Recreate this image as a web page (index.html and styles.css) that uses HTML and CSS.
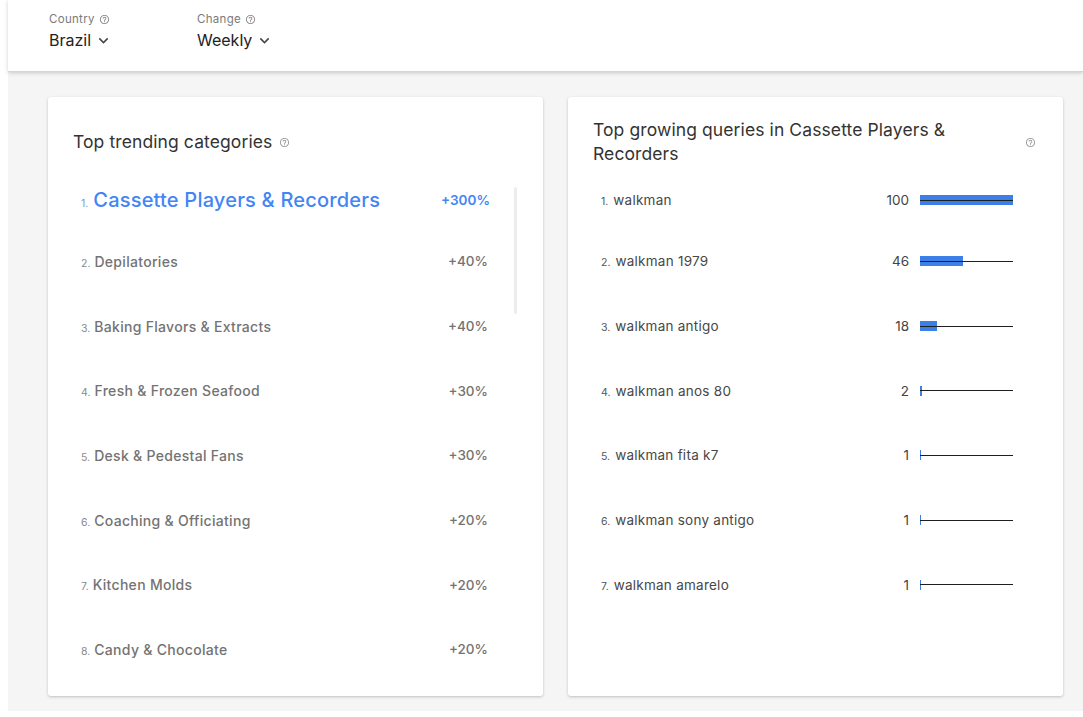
FILE: index.html
```html
<!DOCTYPE html>
<html>
<head>
<meta charset="utf-8">
<link rel="stylesheet" href="styles.css">
</head>
<body>
<div class="page">
  <header class="filters">
    <div class="filter filter-country">
      <div class="label">Country <svg class="help" viewBox="0 0 24 24"><path d="M11 18h2v-2h-2v2zm1-16C6.48 2 2 6.480 2 12s4.48 10 10 10 10-4.48 10-10S17.52 2 12 2zm0 18c-4.41 0-8-3.59-8-8s3.59-8 8-8 8 3.59 8 8-3.59 8-8 8zm0-14c-2.21 0-4 1.79-4 4h2c0-1.1.9-2 2-2s2 .9 2 2c0 2-3 1.75-3 5h2c0-2.25 3-2.5 3-5 0-2.21-1.79-4-4-4z"/></svg></div>
      <div class="value">Brazil <svg class="chev" viewBox="0 0 24 24"><path d="M16.59 8.59L12 13.17 7.41 8.59 6 10l6 6 6-6z"/></svg></div>
    </div>
    <div class="filter">
      <div class="label">Change <svg class="help" viewBox="0 0 24 24"><path d="M11 18h2v-2h-2v2zm1-16C6.48 2 2 6.48 2 12s4.48 10 10 10 10-4.48 10-10S17.52 2 12 2zm0 18c-4.41 0-8-3.59-8-8s3.59-8 8-8 8 3.59 8 8-3.59 8-8 8zm0-14c-2.21 0-4 1.79-4 4h2c0-1.1.9-2 2-2s2 .9 2 2c0 2-3 1.75-3 5h2c0-2.25 3-2.5 3-5 0-2.21-1.79-4-4-4z"/></svg></div>
      <div class="value">Weekly <svg class="chev" viewBox="0 0 24 24"><path d="M16.59 8.59L12 13.17 7.41 8.59 6 10l6 6 6-6z"/></svg></div>
    </div>
  </header>

  <main class="content">
    <section class="card">
      <div class="card-head">
        <h2 class="card-title">Top trending categories</h2>
        <svg class="help help-title" viewBox="0 0 24 24"><path d="M11 18h2v-2h-2v2zm1-16C6.48 2 2 6.48 2 12s4.48 10 10 10 10-4.48 10-10S17.52 2 12 2zm0 18c-4.41 0-8-3.59-8-8s3.59-8 8-8 8 3.59 8 8-3.59 8-8 8zm0-14c-2.21 0-4 1.79-4 4h2c0-1.1.9-2 2-2s2 .9 2 2c0 2-3 1.75-3 5h2c0-2.25 3-2.5 3-5 0-2.21-1.79-4-4-4z"/></svg>
      </div>
      <ol class="list cat-list">
        <li class="row cat active"><span class="name"><span class="num">1.</span>Cassette Players &amp; Recorders</span><span class="pct">+300%</span></li>
        <li class="row cat"><span class="name"><span class="num">2.</span>Depilatories</span><span class="pct">+40%</span></li>
        <li class="row cat"><span class="name"><span class="num">3.</span>Baking Flavors &amp; Extracts</span><span class="pct">+40%</span></li>
        <li class="row cat"><span class="name"><span class="num">4.</span>Fresh &amp; Frozen Seafood</span><span class="pct">+30%</span></li>
        <li class="row cat"><span class="name"><span class="num">5.</span>Desk &amp; Pedestal Fans</span><span class="pct">+30%</span></li>
        <li class="row cat"><span class="name"><span class="num">6.</span>Coaching &amp; Officiating</span><span class="pct">+20%</span></li>
        <li class="row cat"><span class="name"><span class="num">7.</span>Kitchen Molds</span><span class="pct">+20%</span></li>
        <li class="row cat"><span class="name"><span class="num">8.</span>Candy &amp; Chocolate</span><span class="pct">+20%</span></li>
      </ol>
      <div class="scroll-thumb"></div>
    </section>

    <section class="card">
      <div class="card-head spread">
        <h2 class="card-title wrap">Top growing queries in Cassette Players &amp; Recorders</h2>
        <svg class="help help-title" viewBox="0 0 24 24"><path d="M11 18h2v-2h-2v2zm1-16C6.48 2 2 6.48 2 12s4.48 10 10 10 10-4.48 10-10S17.52 2 12 2zm0 18c-4.41 0-8-3.59-8-8s3.59-8 8-8 8 3.59 8 8-3.59 8-8 8zm0-14c-2.21 0-4 1.79-4 4h2c0-1.1.9-2 2-2s2 .9 2 2c0 2-3 1.75-3 5h2c0-2.25 3-2.5 3-5 0-2.21-1.79-4-4-4z"/></svg>
      </div>
      <ol class="list query-list">
        <li class="row query"><span class="name"><span class="num">1.</span>walkman</span><span class="val">100</span><span class="bar"><span class="fill" style="width:100%"></span></span></li>
        <li class="row query"><span class="name"><span class="num">2.</span>walkman 1979</span><span class="val">46</span><span class="bar"><span class="fill" style="width:46%"></span></span></li>
        <li class="row query"><span class="name"><span class="num">3.</span>walkman antigo</span><span class="val">18</span><span class="bar"><span class="fill" style="width:18%"></span></span></li>
        <li class="row query"><span class="name"><span class="num">4.</span>walkman anos 80</span><span class="val">2</span><span class="bar"><span class="fill" style="width:2%"></span></span></li>
        <li class="row query"><span class="name"><span class="num">5.</span>walkman fita k7</span><span class="val">1</span><span class="bar"><span class="fill" style="width:1%"></span></span></li>
        <li class="row query"><span class="name"><span class="num">6.</span>walkman sony antigo</span><span class="val">1</span><span class="bar"><span class="fill" style="width:1%"></span></span></li>
        <li class="row query"><span class="name"><span class="num">7.</span>walkman amarelo</span><span class="val">1</span><span class="bar"><span class="fill" style="width:1%"></span></span></li>
      </ol>
    </section>
  </main>
</div>
</body>
</html>
```

FILE: styles.css
```css
* { box-sizing: border-box; }

html, body {
  margin: 0;
  padding: 0;
  background: #ffffff;
  font-family: Inter, Roboto, "Liberation Sans", Arial, sans-serif;
  color: #333;
}

.page {
  padding-left: 8px;
  width: 1083px;
}

/* ---------- filters header ---------- */
.filters {
  display: flex;
  height: 72px;
  padding: 12px 0 0 41px;
  background: #fff;
  border-bottom: 1px solid #d4d4d4;
  box-shadow: 0 1px 4px rgba(0, 0, 0, 0.18);
  position: relative;
  z-index: 1;
}

.filter-country { width: 148px; }

.label {
  display: flex;
  align-items: center;
  gap: 4px;
  font-size: 11.5px;
  line-height: 14px;
  color: #7a7a7a;
  letter-spacing: 0.3px;
}

.value {
  display: flex;
  align-items: center;
  gap: 3px;
  margin-top: 4px;
  font-size: 16px;
  line-height: 20px;
  color: #222;
}

.help {
  width: 11px;
  height: 11px;
  fill: #8a8a8a;
}

.chev {
  width: 19px;
  height: 19px;
  fill: #444;
}

/* ---------- content ---------- */
.content {
  display: flex;
  gap: 25px;
  padding: 25px 0 15px 40px;
  background: #f5f5f5;
}

.card {
  position: relative;
  width: 495px;
  height: 599px;
  background: #fff;
  border-radius: 3px;
  box-shadow: 0 1px 3px rgba(0, 0, 0, 0.22);
}

.card-head {
  display: flex;
  align-items: center;
  gap: 7px;
  min-height: 48px;
  margin-top: 21px;
  padding: 0 27px 0 25px;
}

.card-head.spread { justify-content: space-between; }

.card-title {
  margin: 0;
  font-size: 17.5px;
  line-height: 24px;
  font-weight: 400;
  color: #333;
  letter-spacing: 0.1px;
}

.card-title.wrap { max-width: 372px; }

.help-title {
  width: 11px;
  height: 11px;
  fill: #9a9a9a;
}

/* ---------- lists ---------- */
.list {
  list-style: none;
  margin: 5px 0 0;
  padding: 0 55px 0 33px;
}

.row {
  display: flex;
  align-items: center;
  height: 64.7px;
}

.row:first-child { height: 58px; }

.name {
  flex: 1;
  display: flex;
  align-items: baseline;
  white-space: nowrap;
}

.num {
  font-size: 10.5px;
  margin-right: 4px;
  letter-spacing: 0;
}

.cat .name {
  font-size: 14px;
  font-weight: 500;
  color: #737373;
  letter-spacing: 0.3px;
}

.cat .num { color: #8a8a8a; font-weight: 400; }

.pct {
  font-size: 13.5px;
  font-weight: 500;
  color: #737373;
}

.cat.active .name {
  font-size: 20px;
  color: #4285f4;
  letter-spacing: 0.2px;
}

.cat.active .num { color: #7d9ad0; margin-right: 5px; }

.cat.active .pct {
  color: #4285f4;
  font-weight: 600;
  margin-right: -2px;
}

.scroll-thumb {
  position: absolute;
  left: 466px;
  top: 90px;
  width: 3px;
  height: 127px;
  background: #ececec;
  border-radius: 2px;
}

.query-list { padding: 0 50px 0 33px; }

.query .name {
  font-size: 13.5px;
  color: #474747;
  letter-spacing: 0.25px;
}

.query .num { color: #555; margin-right: 5px; }

.val {
  font-size: 13.5px;
  color: #444;
  margin-right: 11px;
}

.bar {
  position: relative;
  width: 93px;
  height: 10px;
}

.bar::after {
  content: "";
  position: absolute;
  left: 0;
  right: 0;
  top: 4.5px;
  height: 1px;
  background: #1f1f1f;
}

.fill {
  position: absolute;
  left: 0;
  top: 0;
  height: 10px;
  min-width: 1px;
  background: #3c7fe6;
}
```
